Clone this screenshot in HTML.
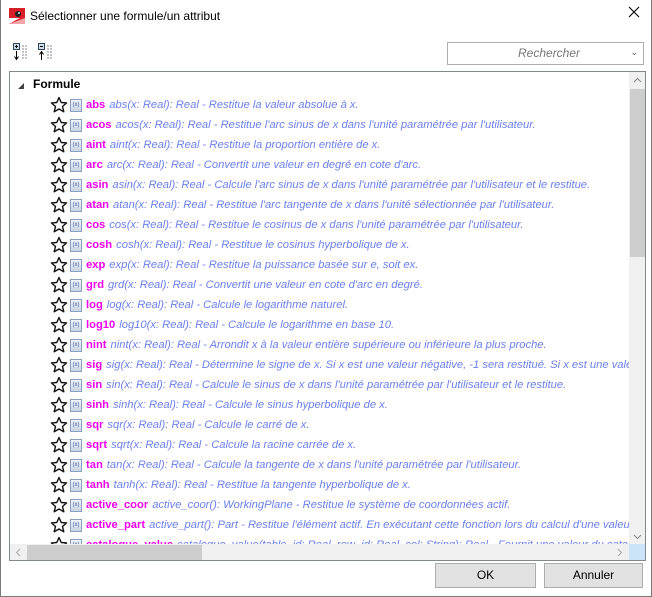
<!DOCTYPE html>
<html><head><meta charset="utf-8"><style>
*{margin:0;padding:0;box-sizing:border-box}
body{width:652px;height:597px;overflow:hidden;background:#fff;font-family:"Liberation Sans",sans-serif;position:relative}
.win{position:absolute;left:0;top:0;width:652px;height:597px;border:1px solid #7a7a7a;border-top:none}
.title{position:absolute;left:30px;top:9px;font-size:12px;color:#000}
.close{position:absolute;left:628px;top:6px}
.list{position:absolute;left:9px;top:71px;width:637px;height:490px;border:1px solid #828790;overflow:hidden}
.row{position:absolute;left:0;height:20px;white-space:nowrap;font-size:11.2px;line-height:20px}
.star{position:absolute;left:40px;top:1px}
.ic{position:absolute;left:60px;top:4px;width:12px;height:13px;border:1px solid #8aa0c0;background:linear-gradient(#f4f7fb,#c8d4e4);font-size:6px;line-height:11px;text-align:center;color:#3a5a9a}
.nm{position:absolute;left:76px;font-weight:bold;color:#ee00ee}
.ds{font-style:italic;color:#6b80ee;font-weight:normal;margin-left:4px}
.vs{position:absolute;left:619px;top:0;width:17px;height:472px;background:#f0f0f0}
.hs{position:absolute;left:0;top:472px;width:619px;height:17px;background:#f0f0f0}
.btn{position:absolute;top:563px;height:25px;background:#e1e1e1;border:1px solid #adadad;font-size:12px;text-align:center;line-height:23px}
</style></head><body>
<div class="win"></div>
<svg style="position:absolute;left:9px;top:8px" width="16" height="16"><rect x="0" y="0" width="16" height="16" fill="#fff"/><rect x="0" y="0" width="16" height="10" fill="#d8202a"/><circle cx="9" cy="6" r="3" fill="#222"/><circle cx="10" cy="5" r="1" fill="#ddd"/><path d="M0 16 L16 7 L16 16Z" fill="#e0202a"/><path d="M0 16 L16 10 L16 16Z" fill="#fff" opacity=".6"/></svg>
<div class="title">Sélectionner une formule/un attribut</div>
<svg class="close" width="12" height="12"><path d="M1 1L11 11M11 1L1 11" stroke="#000" stroke-width="1.1"/></svg>
<svg style="position:absolute;left:13px;top:43px" width="16" height="18"><rect x="0.5" y="0.5" width="6" height="6" fill="#cde" stroke="#345"/><path d="M2 3.5h3M3.5 2v3" stroke="#000"/><path d="M3.5 8v8M1.5 13.5l2 3 2-3" stroke="#000" fill="none"/><path d="M9 3h6M9 6h6M9 9h6M9 12h6M9 15h6" stroke="#889" stroke-dasharray="2 1"/></svg>
<svg style="position:absolute;left:38px;top:43px" width="16" height="18"><rect x="0.5" y="0.5" width="6" height="6" fill="#cde" stroke="#345"/><path d="M2 3.5h3" stroke="#000"/><path d="M3.5 17v-8M1.5 11.5l2-3 2 3" stroke="#000" fill="none"/><path d="M9 3h6M9 6h6M9 9h6M9 12h6M9 15h6" stroke="#889" stroke-dasharray="2 1"/></svg>
<div style="position:absolute;left:447px;top:42px;width:197px;height:23px;border:1px solid #adadad;font-size:12px;font-style:italic;color:#777;line-height:21px;padding-left:70px">Rechercher<span style="position:absolute;right:5px;top:-1px;font-style:normal;font-size:9px;color:#555">&#8964;</span></div>
<div class="list">
<svg style="position:absolute;left:7px;top:10px" width="8" height="8"><path d="M7 1L7 7L1 7Z" fill="#444"/></svg>
<div style="position:absolute;left:23px;top:5px;font-size:12px;font-weight:bold">Formule</div>
<div id="rows"></div>
<div class="vs"><svg style="position:absolute;left:4px;top:5px" width="9" height="6"><path d="M1 5l3.5-3.5L8 5" stroke="#888" fill="none"/></svg><div style="position:absolute;left:1px;top:17px;width:16px;height:168px;background:#cdcdcd"></div><svg style="position:absolute;left:4px;top:462px" width="9" height="6"><path d="M1 1l3.5 3.5L8 1" stroke="#888" fill="none"/></svg></div>
<div class="hs"><svg style="position:absolute;left:5px;top:4px" width="6" height="9"><path d="M5 1L1.5 4.5 5 8" stroke="#aaa" fill="none"/></svg><div style="position:absolute;left:17px;top:1px;width:175px;height:16px;background:#cdcdcd"></div><svg style="position:absolute;left:607px;top:4px" width="6" height="9"><path d="M1 1l3.5 3.5L1 8" stroke="#aaa" fill="none"/></svg></div>
<div style="position:absolute;left:619px;top:472px;width:17px;height:17px;background:#cce4f7"></div>
</div>
<div class="btn" style="left:435px;width:101px">OK</div>
<div class="btn" style="left:544px;width:99px">Annuler</div>
<script>
var d=[["abs","abs(x: Real): Real - Restitue la valeur absolue à x."],
["acos","acos(x: Real): Real - Restitue l'arc sinus de x dans l'unité paramétrée par l'utilisateur."],
["aint","aint(x: Real): Real - Restitue la proportion entière de x."],
["arc","arc(x: Real): Real - Convertit une valeur en degré en cote d'arc."],
["asin","asin(x: Real): Real - Calcule l'arc sinus de x dans l'unité paramétrée par l'utilisateur et le restitue."],
["atan","atan(x: Real): Real - Restitue l'arc tangente de x dans l'unité sélectionnée par l'utilisateur."],
["cos","cos(x: Real): Real - Restitue le cosinus de x dans l'unité paramétrée par l'utilisateur."],
["cosh","cosh(x: Real): Real - Restitue le cosinus hyperbolique de x."],
["exp","exp(x: Real): Real - Restitue la puissance basée sur e, soit ex."],
["grd","grd(x: Real): Real - Convertit une valeur en cote d'arc en degré."],
["log","log(x: Real): Real - Calcule le logarithme naturel."],
["log10","log10(x: Real): Real - Calcule le logarithme en base 10."],
["nint","nint(x: Real): Real - Arrondit x à la valeur entière supérieure ou inférieure la plus proche."],
["sig","sig(x: Real): Real - Détermine le signe de x. Si x est une valeur négative, -1 sera restitué. Si x est une valeur positive"],
["sin","sin(x: Real): Real - Calcule le sinus de x dans l'unité paramétrée par l'utilisateur et le restitue."],
["sinh","sinh(x: Real): Real - Calcule le sinus hyperbolique de x."],
["sqr","sqr(x: Real): Real - Calcule le carré de x."],
["sqrt","sqrt(x: Real): Real - Calcule la racine carrée de x."],
["tan","tan(x: Real): Real - Calcule la tangente de x dans l'unité paramétrée par l'utilisateur."],
["tanh","tanh(x: Real): Real - Restitue la tangente hyperbolique de x."],
["active_coor","active_coor(): WorkingPlane - Restitue le système de coordonnées actif."],
["active_part","active_part(): Part - Restitue l'élément actif. En exécutant cette fonction lors du calcul d'une valeur"],
["catalogue_value","catalogue_value(table_id: Real, row_id: Real, col: String): Real - Fournit une valeur du catalogue"]];
var h="";d.forEach(function(r,i){h+='<div class="row" style="top:'+(23+i*20)+'px"><svg class="star" width="18" height="18"><path d="M9 1.5l2.2 5 5.4.4-4.1 3.6 1.3 5.3L9 13l-4.8 2.8 1.3-5.3L1.4 6.9l5.4-.4Z" fill="#fff" stroke="#111" stroke-width="1.4" stroke-linejoin="round"/></svg><div class="ic">(x)</div><span class="nm">'+r[0]+'<span class="ds">'+r[1]+'</span></span></div>'});
document.getElementById("rows").innerHTML=h;
</script>
</body></html>
